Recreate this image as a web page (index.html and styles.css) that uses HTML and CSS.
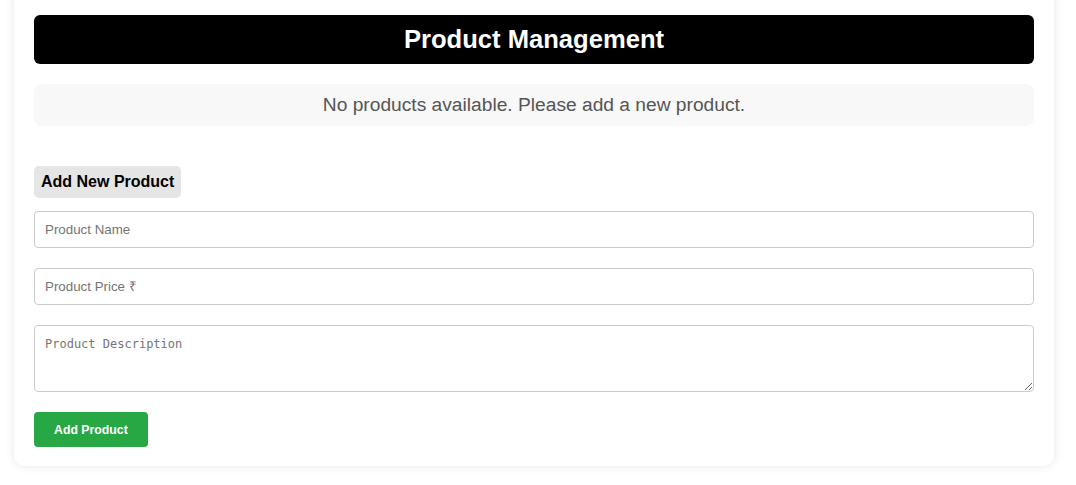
FILE: index.html
```html
<!DOCTYPE html>
<html lang="en">
<head>
<meta charset="utf-8">
<title>Product Management</title>
<link rel="stylesheet" href="styles.css">
</head>
<body>
<div class="container">
  <h1 class="title">Product Management</h1>
  <p class="empty">No products available. Please add a new product.</p>
  <h2 class="form-title">Add New Product</h2>
  <form class="form">
    <input class="field" type="text" placeholder="Product Name">
    <input class="field" type="text" placeholder="Product Price ₹">
    <textarea class="field area" placeholder="Product Description"></textarea>
    <div><button class="btn" type="button">Add Product</button></div>
  </form>
</div>
</body>
</html>
```
FILE: styles.css
```css
html, body {
  margin: 0;
  padding: 0;
  background: #ffffff;
  font-family: "Liberation Sans", Arial, sans-serif;
}
.container {
  width: 1000px;
  margin: -10px 0 18px 14px;
  padding: 25px 20px 19px;
  background: #fff;
  border-radius: 10px;
  box-shadow: 0 0 10px rgba(0, 0, 0, 0.1);
}
.title {
  margin: 0;
  height: 49px;
  display: flex;
  align-items: center;
  justify-content: center;
  background: #000;
  color: #fff;
  border-radius: 6px;
  font-size: 25.6px;
  font-weight: bold;
}
.empty {
  margin: 20px 0 40px;
  height: 42px;
  display: flex;
  align-items: center;
  justify-content: center;
  background: #f8f8f8;
  border-radius: 8px;
  color: #555;
  font-size: 19.2px;
}
.form-title {
  display: inline-block;
  margin: 0 0 13px;
  padding: 0 7px;
  height: 32px;
  line-height: 32px;
  background: #e5e5e5;
  border-radius: 5px;
  font-size: 16px;
  font-weight: bold;
  color: #000;
}
.form {
  display: flex;
  flex-direction: column;
  gap: 20px;
}
.field {
  box-sizing: border-box;
  width: 1000px;
  height: 37px;
  padding: 0 10px;
  border: 1px solid #ccc;
  border-radius: 4px;
  font-family: "Liberation Sans", Arial, sans-serif;
  font-size: 13.333px;
  color: #000;
  margin: 0;
}
.field::placeholder {
  color: #757575;
}
.area {
  height: 67px;
  padding: 11px 10px 10px;
  font-family: "DejaVu Sans Mono", monospace;
  font-size: 12px;
  line-height: 15px;
}
.btn {
  height: 35px;
  padding: 0 20px;
  background: #28a745;
  color: #fff;
  border: none;
  border-radius: 4px;
  font-family: "Liberation Sans", Arial, sans-serif;
  font-size: 12.3px;
  font-weight: bold;
  margin-top: 0;
}
```
